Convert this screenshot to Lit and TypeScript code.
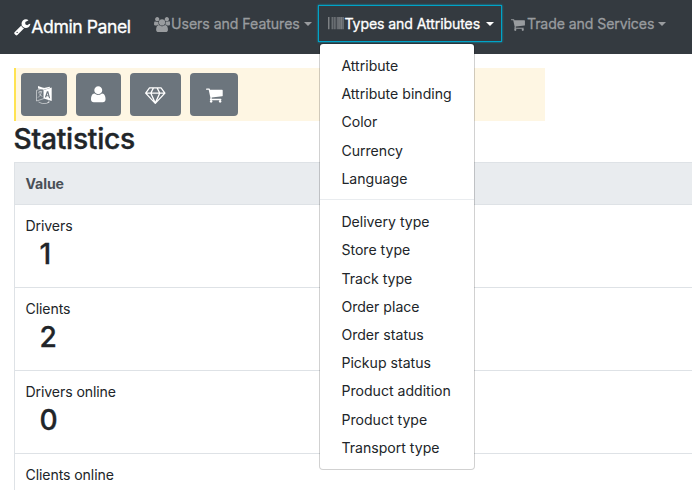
import { LitElement, html, css, svg, nothing } from "lit";
import { customElement, property } from "lit/decorators.js";

const bars = [
  [0, 63], [94, 32], [189, 31], [346, 31], [472, 62], [629, 31], [692, 31], [755, 31],
  [880, 63], [1037, 63], [1163, 63], [1289, 63], [1383, 63], [1541, 94], [1666, 32], [1729, 63],
];

const icons: Record<string, { w: number; d: string }> = {
  wrench: { w: 1664, d: "M384 64q0 26 -19 45t-45 19t-45 -19t-19 -45t19 -45t45 -19t45 19t19 45zM1028 484l-682 -682q-37 -37 -90 -37q-52 0 -91 37l-106 108q-38 36 -38 90q0 53 38 91l681 681q39 -98 114.5 -173.5t173.5 -114.5zM1662 919q0 -39 -23 -106q-47 -134 -164.5 -217.5t-258.5 -83.5q-185 0 -316.5 131.5t-131.5 316.5t131.5 316.5t316.5 131.5q58 0 121.5 -16.5t107.5 -46.5q16 -11 16 -28t-16 -28l-293 -169v-224l193 -107q5 3 79 48.5t135.5 81t70.5 35.5q15 0 23.5 -10t8.5 -25z" },
  users: { w: 1920, d: "M593 640q-162 -5 -265 -128h-134q-82 0 -138 40.5t-56 118.5q0 353 124 353q6 0 43.5 -21t97.5 -42.5t119 -21.5q67 0 133 23q-5 -37 -5 -66q0 -159 90 -287zM1664 3q0 -120 -73 -189.5t-194 -69.5h-874q-121 0 -194 69.5t-73 189.5q0 53 3.5 103.5t14 109t26.5 108.5t43 97.5t62 81t85.5 53.5t111.5 20q10 0 43 -21.5t73 -48t107 -48t135 -21.5t135 21.5t107 48t73 48t43 21.5q61 0 111.5 -20t85.5 -53.5t62 -81t43 -97.5t26.5 -108.5t14 -109t3.5 -103.5zM640 1280q0 -106 -75 -181t-181 -75t-181 75t-75 181t75 181t181 75t181 -75t75 -181zM1344 896q0 -159 -112.5 -271.5t-271.5 -112.5t-271.5 112.5t-112.5 271.5t112.5 271.5t271.5 112.5t271.5 -112.5t112.5 -271.5zM1920 671q0 -78 -56 -118.5t-138 -40.5h-134q-103 123 -265 128q90 128 90 287q0 29 -5 66q66 -23 133 -23q59 0 119 21.5t97.5 42.5t43.5 21q124 0 124 -353zM1792 1280q0 -106 -75 -181t-181 -75t-181 75t-75 181t75 181t181 75t181 -75t75 -181z" },
  barcode: { w: 1792, d: bars.map(([x, w]) => `M${x} 0h${w}v1408h-${w}z`).join("") },
  cart: { w: 1664, d: "M640 0q0 -52 -38 -90t-90 -38t-90 38t-38 90t38 90t90 38t90 -38t38 -90zM1536 0q0 -52 -38 -90t-90 -38t-90 38t-38 90t38 90t90 38t90 -38t38 -90zM1664 1088v-512q0 -24 -16.5 -42.5t-40.5 -21.5l-1044 -122q13 -60 13 -70q0 -16 -24 -64h920q26 0 45 -19t19 -45t-19 -45t-45 -19h-1024q-26 0 -45 19t-19 45q0 11 8 31.5t16 36t21.5 40t15.5 29.5l-177 823h-204q-26 0 -45 19t-19 45t19 45t45 19h256q16 0 28.5 -6.5t19.5 -15.5t13 -24.5t8 -26t5.5 -29.5t4.5 -26h1201q26 0 45 -19t19 -45z" },
  user: { w: 1408, d: "M1408 131q0 -120 -73 -189.5t-194 -69.5h-874q-121 0 -194 69.5t-73 189.5q0 53 3.5 103.5t14 109t26.5 108.5t43 97.5t62 81t85.5 53.5t111.5 20q9 0 42 -21.5t74.5 -48t108 -48t133.5 -21.5t133.5 21.5t108 48t74.5 48t42 21.5q61 0 111.5 -20t85.5 -53.5t62 -81t43 -97.5t26.5 -108.5t14 -109t3.5 -103.5zM1088 1024q0 -159 -112.5 -271.5t-271.5 -112.5t-271.5 112.5t-112.5 271.5t112.5 271.5t271.5 112.5t271.5 -112.5t112.5 -271.5z" },
  diamond: { w: 2048, d: "M212 768l623 -665l-300 665h-323zM1024 -4l349 772h-698zM538 896l204 384h-262l-288 -384h346zM1213 103l623 665h-323zM683 896h682l-204 384h-274zM1510 896h346l-288 384h-262zM1651 1382l384 -512q14 -18 13 -41.5t-17 -40.5l-960 -1024q-18 -20 -47 -20t-47 20l-960 1024q-16 17 -17 40.5t13 41.5l384 512q18 26 51 26h1152q33 0 51 -26z" },
};

@customElement("fa-icon")
export class FaIcon extends LitElement {
  @property() name = "user";
  @property({ type: Number }) size = 14;

  static styles = css`
    :host { display: inline-flex; flex: none; }
    .glyph { display: block; fill: currentColor; overflow: visible; }
    .line { fill: none; stroke: currentColor; stroke-width: 0.7; opacity: 0.75; }
  `;

  render() {
    if (this.name === "language") {
      return html`<svg class="glyph" width="16" height="18" viewBox="0 0 16 18">
        ${svg`
          <path fill-rule="evenodd" d="M7.8 4L15.7 1.6V14.9L7.8 12.4ZM10.9 5.2L8.9 11.2L10.2 11.5L10.6 10.1L12.6 10.6L13 12.1L14.2 12.4L12.3 5.3ZM11.6 7.1L12.3 9.5L10.9 9.2Z"/>
          <path d="M2 0L7.8 2L13.8 .8V2L7.8 3.8L2 2.6Z"/>
          <path class="line" d="M.5 4.4L7.8 2V12.6L.5 15ZM2.2 6.4L6.2 5.2M4 4.8V6.5M5.6 5.8Q5 9.5 2 11.6M3 7.4Q4.5 10 6.4 10.4M2.5 16Q6 18.4 10.4 17.4L13 16M12.6 14.6L13.2 16.3L11.5 16.8"/>
        `}
      </svg>`;
    }
    const icon = icons[this.name];
    return html`<svg class="glyph" width=${(icon.w / 1792) * this.size} height=${this.size}
      viewBox="0 0 ${icon.w} 1792">${svg`<path transform="matrix(1 0 0 -1 0 1536)" d=${icon.d}/>`}</svg>`;
  }
}

@customElement("app-root")
export class AppRoot extends LitElement {
  static styles = css`
    :host {
      display: block; height: 490px; overflow: hidden; background: #fff; color: #212529;
      font: 400 14.1px/21.15px Inter, "Liberation Sans", sans-serif; white-space: nowrap;
    }
    * { box-sizing: border-box; }
    .navbar { display: flex; align-items: flex-start; height: 54px; padding: 5px 0 0 14px; background: #343a40; color: #999c9f; }
    .brand { display: flex; align-items: center; gap: 1px; width: 132px; height: 43px; font-size: 17.6px; color: #fff; letter-spacing: -0.42px; -webkit-text-stroke: 0.3px; }
    .item { position: relative; display: flex; align-items: center; height: 38px; -webkit-text-stroke: 0.3px; }
    .users { width: 172px; padding-left: 8px; }
    .users .label { margin-left: 1px; letter-spacing: -0.04px; }
    .types { width: 184px; height: 37px; padding: 1px 0 0 9px; border: 1px solid #00a3c7; box-shadow: 0 0 2px #00a3c7; }
    .trade { padding-left: 9px; }
    .types .label { margin-left: 1px; color: #fff; letter-spacing: -0.1px; }
    .trade .label { margin-left: 2px; letter-spacing: -0.09px; }
    .types fa-icon { color: #999c9f; }
    .caret { margin-left: 4px; border: 4px solid transparent; border-top-color: currentColor; border-bottom: 0; }
    .trade .caret { margin-left: 4px; }
    .types .caret { color: #fff; margin-left: 6px; }
    .menu {
      position: absolute; z-index: 2; top: 37px; left: 0; width: 156px; height: 427px; padding: 7.4px 0;
      background: #fff; background-clip: padding-box; border: 1px solid rgba(0, 0, 0, 0.18);
      border-radius: 4px; color: #212529; -webkit-text-stroke: 0;
    }
    .entry { height: 28.22px; padding: 3.6px 21.4px; }
    .divider { height: 1px; margin: 6.8px 0 7.2px; background: #e9ecef; }
    .page { padding: 14px 0 0 14px; }
    .tools { display: flex; gap: 9px; width: 531px; height: 53px; padding: 5px; border-left: 2px solid #ffe351; background: #fef6e3; }
    .tool { display: flex; align-items: center; justify-content: center; height: 43px; border-radius: 4px; background: #6c757d; color: #fff; }
    .w46 { width: 46px; }
    .w45 { width: 45px; }
    .w51 { width: 51px; }
    .w48 { width: 48px; }
    .title { margin: 1px 0 6px -0.5px; font-size: 28.2px; line-height: 34px; font-weight: 500; letter-spacing: -0.25px; -webkit-text-stroke: 0.4px; }
    .table { width: 760px; border: 1px solid #dee2e6; border-bottom: 0; }
    .head { height: 41px; padding: 10px 10.5px; background: #e9ecef; color: #495057; font-weight: 700; letter-spacing: -0.1px; }
    .row { height: 83px; padding: 10px 10.5px; border-top: 1px solid #dee2e6; letter-spacing: -0.1px; }
    .count { padding-left: 14px; font-size: 28.2px; line-height: 37px; font-weight: 500; -webkit-text-stroke: 0.3px; }
  `;

  private groups = [
    ["Attribute", "Attribute binding", "Color", "Currency", "Language"],
    ["Delivery type", "Store type", "Track type", "Order place", "Order status", "Pickup status", "Product addition", "Product type", "Transport type"],
  ];

  private rows = [["Drivers", "1"], ["Clients", "2"], ["Drivers online", "0"], ["Clients online", ""]];

  private entries(list: string[]) {
    return list.map((e) => html`<div class="entry">${e}</div>`);
  }

  render() {
    return html`
      <nav class="navbar">
        <div class="brand"><fa-icon name="wrench" size="17.6"></fa-icon><span>Admin Panel</span></div>
        <div class="item users"><fa-icon name="users" size="15"></fa-icon><span class="label">Users and Features</span><i class="caret"></i></div>
        <div class="item types">
          <fa-icon name="barcode" size="15.5"></fa-icon><span class="label">Types and Attributes</span><i class="caret"></i>
          <div class="menu">${this.entries(this.groups[0])}<div class="divider"></div>${this.entries(this.groups[1])}</div>
        </div>
        <div class="item trade"><fa-icon name="cart" size="15"></fa-icon><span class="label">Trade and Services</span><i class="caret"></i></div>
      </nav>
      <main class="page">
        <div class="tools">
          <div class="tool w46"><fa-icon name="language"></fa-icon></div>
          <div class="tool w45"><fa-icon name="user" size="18.5"></fa-icon></div>
          <div class="tool w51"><fa-icon name="diamond" size="18"></fa-icon></div>
          <div class="tool w48"><fa-icon name="cart" size="18"></fa-icon></div>
        </div>
        <h2 class="title">Statistics</h2>
        <div class="table">
          <div class="head">Value</div>
          ${this.rows.map(([label, n]) => html`<div class="row"><div>${label}</div>${n ? html`<div class="count">${n}</div>` : nothing}</div>`)}
        </div>
      </main>
    `;
  }
}
